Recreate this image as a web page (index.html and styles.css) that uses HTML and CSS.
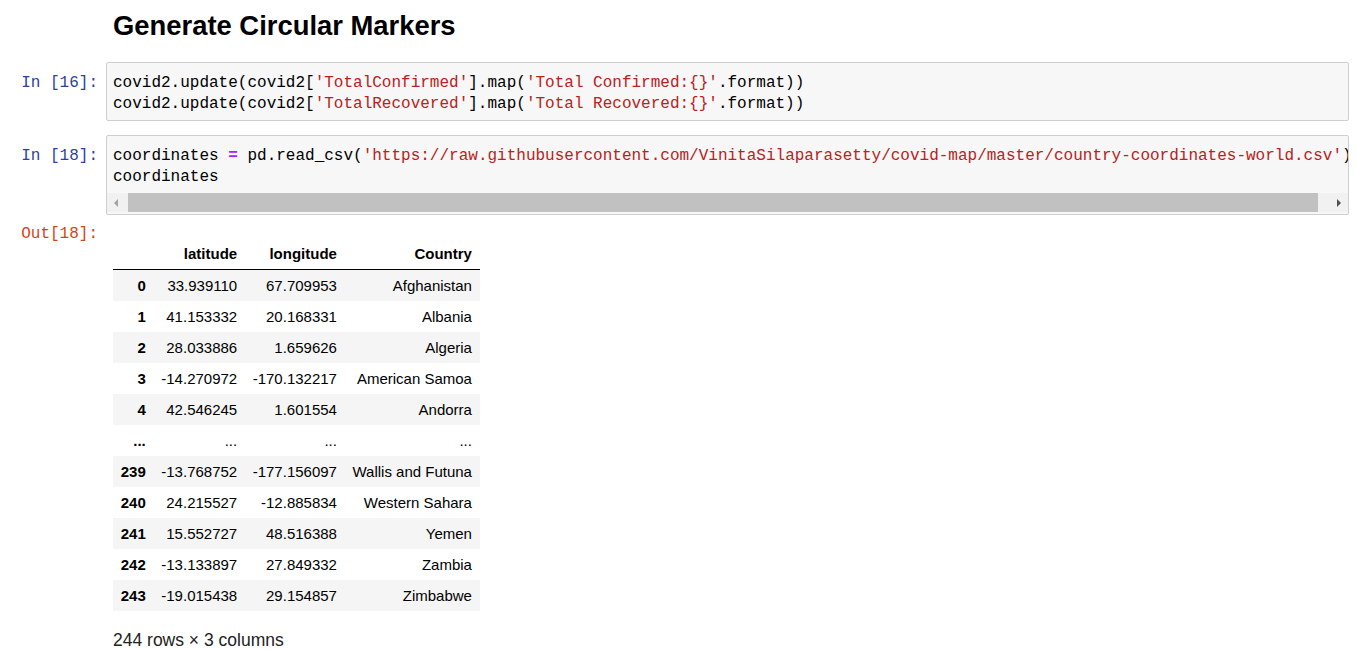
FILE: index.html
```html
<!DOCTYPE html>
<html>
<head>
<meta charset="utf-8">
<link rel="stylesheet" href="styles.css">
</head>
<body>
<div class="notebook">
  <div class="md-cell">
    <h2 class="md-title">Generate Circular Markers</h2>
  </div>

  <div class="cell cell-first">
    <div class="prompt prompt-in">In&nbsp;[16]:</div>
    <div class="input-box">
      <div class="code">covid2.update(covid2[<span class="s">'TotalConfirmed'</span>].map(<span class="s">'Total Confirmed:{}'</span>.format))
covid2.update(covid2[<span class="s">'TotalRecovered'</span>].map(<span class="s">'Total Recovered:{}'</span>.format))</div>
    </div>
  </div>

  <div class="cell cell-second">
    <div class="prompt prompt-in">In&nbsp;[18]:</div>
    <div class="input-box input-scroll">
      <div class="code code-clip">coordinates <span class="op">=</span> pd.read_csv(<span class="s">'https://raw.githubusercontent.com/VinitaSilaparasetty/covid-map/master/country-coordinates-world.csv'</span>)
coordinates</div>
      <div class="hscroll">
        <div class="sb-btn sb-left"><span class="arrow-left"></span></div>
        <div class="sb-thumb"></div>
        <div class="sb-btn sb-right"><span class="arrow-right"></span></div>
      </div>
    </div>
  </div>

  <div class="cell cell-output">
    <div class="prompt prompt-out">Out[18]:</div>
    <div class="output">
      <table class="df">
        <thead>
          <tr><th></th><th>latitude</th><th>longitude</th><th>Country</th></tr>
        </thead>
        <tbody>
          <tr><th>0</th><td>33.939110</td><td>67.709953</td><td>Afghanistan</td></tr>
          <tr><th>1</th><td>41.153332</td><td>20.168331</td><td>Albania</td></tr>
          <tr><th>2</th><td>28.033886</td><td>1.659626</td><td>Algeria</td></tr>
          <tr><th>3</th><td>-14.270972</td><td>-170.132217</td><td>American Samoa</td></tr>
          <tr><th>4</th><td>42.546245</td><td>1.601554</td><td>Andorra</td></tr>
          <tr><th>...</th><td>...</td><td>...</td><td>...</td></tr>
          <tr><th>239</th><td>-13.768752</td><td>-177.156097</td><td>Wallis and Futuna</td></tr>
          <tr><th>240</th><td>24.215527</td><td>-12.885834</td><td>Western Sahara</td></tr>
          <tr><th>241</th><td>15.552727</td><td>48.516388</td><td>Yemen</td></tr>
          <tr><th>242</th><td>-13.133897</td><td>27.849332</td><td>Zambia</td></tr>
          <tr><th>243</th><td>-19.015438</td><td>29.154857</td><td>Zimbabwe</td></tr>
        </tbody>
      </table>
      <p class="df-shape">244 rows × 3 columns</p>
    </div>
  </div>
</div>
</body>
</html>
```

FILE: styles.css
```css
html, body {
  margin: 0;
  padding: 0;
  background: #ffffff;
}

body {
  font-family: "Liberation Sans", Arial, sans-serif;
  color: #000000;
  width: 1356px;
  height: 650px;
  overflow: hidden;
}

.notebook {
  padding-right: 7px;
}

.md-cell {
  padding-left: 113px;
  padding-top: 10px;
}

.md-title {
  margin: 0;
  font-size: 27.4px;
  line-height: 32px;
  font-weight: bold;
  color: #000000;
}

.cell {
  display: flex;
  align-items: flex-start;
}

.cell-first {
  margin-top: 20px;
}

.cell-second {
  margin-top: 14px;
}

.cell-output {
  margin-top: 7px;
}

.prompt {
  flex: 0 0 98px;
  margin-right: 8px;
  text-align: right;
  font-family: "Liberation Mono", "Courier New", monospace;
  font-size: 16px;
  line-height: 21px;
  white-space: nowrap;
}

.prompt-in {
  color: #303F9F;
  padding-top: 11px;
}

.prompt-out {
  color: #D84315;
  padding-top: 2px;
}

.input-box {
  flex: 1 1 auto;
  min-width: 0;
  background: #f7f7f7;
  border: 1px solid #cfcfcf;
  border-radius: 2px;
  padding: 10px 6px 5px 6px;
}

.code {
  font-family: "Liberation Mono", "Courier New", monospace;
  font-size: 16px;
  line-height: 21px;
  white-space: pre;
  color: #000000;
}

.s {
  color: #BA2121;
}

.op {
  color: #AA22FF;
  font-weight: bold;
}

.input-scroll {
  padding: 10px 0 2px 0;
}

.code-clip {
  padding-left: 6px;
  overflow: hidden;
}

.hscroll {
  margin-top: 5px;
  height: 19px;
  display: flex;
  background: #f1f1f1;
}

.sb-btn {
  position: relative;
  height: 19px;
}

.sb-left {
  flex: 0 0 21px;
}

.sb-right {
  flex: 0 0 30px;
}

.sb-thumb {
  flex: 1 1 auto;
  background: #c1c1c1;
}

.arrow-left,
.arrow-right {
  position: absolute;
  top: 6px;
  width: 0;
  height: 0;
  border-top: 4px solid transparent;
  border-bottom: 4px solid transparent;
}

.arrow-left {
  left: 7px;
  border-right: 4px solid #a3a3a3;
}

.arrow-right {
  left: 19px;
  border-left: 4px solid #505050;
}

.output {
  flex: 1 1 auto;
  padding-left: 7px;
}

.df {
  margin-top: 16px;
  border-collapse: collapse;
  border: none;
  font-family: "Liberation Sans", Arial, sans-serif;
  font-size: 15px;
  color: #000000;
}

.df th,
.df td {
  padding: 7.5px 7.75px;
  line-height: 16px;
  text-align: right;
  vertical-align: middle;
  white-space: nowrap;
  border: none;
}

.df th {
  font-weight: bold;
}

.df thead th {
  border-bottom: 1px solid #000000;
}

.df tbody tr:nth-child(odd) {
  background: #f5f5f5;
}

.df-shape {
  margin: 19px 0 0 0;
  font-size: 17.5px;
  line-height: 20px;
  color: #222222;
}
```
